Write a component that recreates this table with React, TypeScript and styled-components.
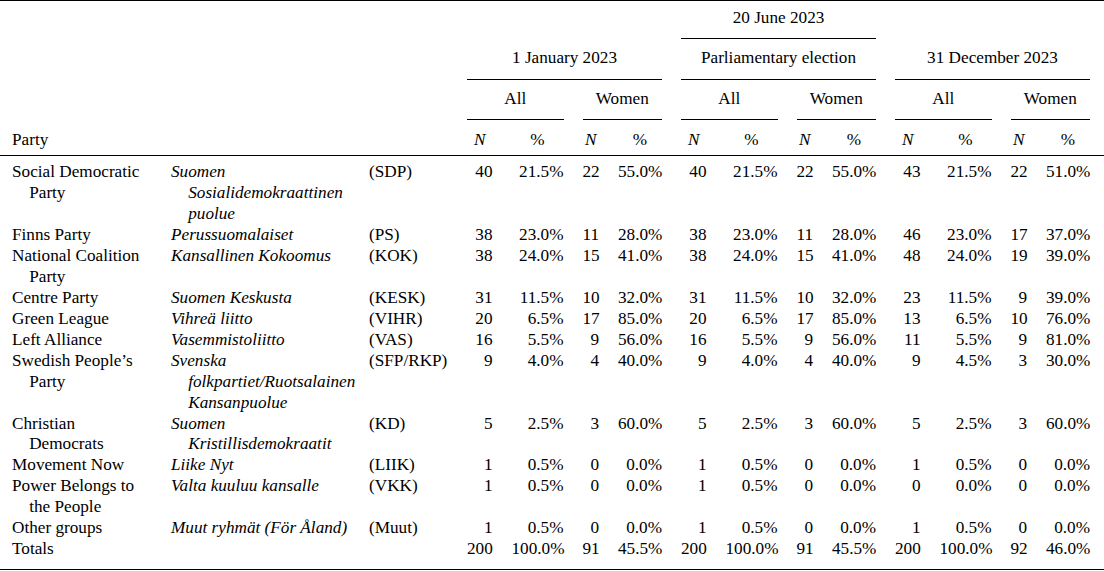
import React from "react";
import styled, { createGlobalStyle } from "styled-components";

const GlobalStyle = createGlobalStyle`
  html, body {
    margin: 0;
    padding: 0;
    background: #fff;
  }
  body {
    font-family: "Liberation Serif", "Times New Roman", serif;
    color: #000;
  }
`;

const Table = styled.div`
  display: grid;
  grid-template-columns: 140px 179px 79px repeat(3, 25.5px 52px 16.5px 44px);
  grid-template-rows: 38px 41px 40px 35px;
  column-gap: 19px;
  width: 1104px;
  box-sizing: border-box;
  padding: 0 14px 0 12px;
  border-top: 1px solid #000;
  font-size: 17.2px;
  line-height: 20.94px;
`;

const HeadCell = styled.div<{
  $span?: number;
  $pt: number;
  $rule?: boolean;
  $align?: "left" | "center";
  $italic?: boolean;
}>`
  grid-column: span ${({ $span }) => $span ?? 1};
  box-sizing: border-box;
  padding-top: ${({ $pt }) => $pt}px;
  text-align: ${({ $align }) => $align ?? "center"};
  font-style: ${({ $italic }) => ($italic ? "italic" : "normal")};
  border-bottom: ${({ $rule }) => ($rule ? "1px solid #000" : "none")};
  white-space: nowrap;
`;

const Rule = styled.div<{ $before?: number; $after?: number }>`
  grid-column: 1 / -1;
  height: 1px;
  background: #000;
  margin: ${({ $before }) => $before ?? 0}px -14px ${({ $after }) => $after ?? 0}px -12px;
`;

const TextCell = styled.div<{ $italic?: boolean }>`
  padding-left: 1em;
  text-indent: -1em;
  font-style: ${({ $italic }) => ($italic ? "italic" : "normal")};
`;

const AbbrCell = styled.div`
  white-space: nowrap;
`;

const NumCell = styled.div`
  text-align: right;
  white-space: nowrap;
`;

type Block = [number, string, number, string];

type Row = {
  en: string;
  fi: string;
  abbr: string;
  v: [Block, Block, Block];
};

const rows: Row[] = [
  {
    en: "Social Democratic Party",
    fi: "Suomen Sosialidemokraattinen puolue",
    abbr: "(SDP)",
    v: [
      [40, "21.5%", 22, "55.0%"],
      [40, "21.5%", 22, "55.0%"],
      [43, "21.5%", 22, "51.0%"],
    ],
  },
  {
    en: "Finns Party",
    fi: "Perussuomalaiset",
    abbr: "(PS)",
    v: [
      [38, "23.0%", 11, "28.0%"],
      [38, "23.0%", 11, "28.0%"],
      [46, "23.0%", 17, "37.0%"],
    ],
  },
  {
    en: "National Coalition Party",
    fi: "Kansallinen Kokoomus",
    abbr: "(KOK)",
    v: [
      [38, "24.0%", 15, "41.0%"],
      [38, "24.0%", 15, "41.0%"],
      [48, "24.0%", 19, "39.0%"],
    ],
  },
  {
    en: "Centre Party",
    fi: "Suomen Keskusta",
    abbr: "(KESK)",
    v: [
      [31, "11.5%", 10, "32.0%"],
      [31, "11.5%", 10, "32.0%"],
      [23, "11.5%", 9, "39.0%"],
    ],
  },
  {
    en: "Green League",
    fi: "Vihreä liitto",
    abbr: "(VIHR)",
    v: [
      [20, "6.5%", 17, "85.0%"],
      [20, "6.5%", 17, "85.0%"],
      [13, "6.5%", 10, "76.0%"],
    ],
  },
  {
    en: "Left Alliance",
    fi: "Vasemmistoliitto",
    abbr: "(VAS)",
    v: [
      [16, "5.5%", 9, "56.0%"],
      [16, "5.5%", 9, "56.0%"],
      [11, "5.5%", 9, "81.0%"],
    ],
  },
  {
    en: "Swedish People’s Party",
    fi: "Svenska folkpartiet/\u2060Ruotsalainen Kansanpuolue",
    abbr: "(SFP/RKP)",
    v: [
      [9, "4.0%", 4, "40.0%"],
      [9, "4.0%", 4, "40.0%"],
      [9, "4.5%", 3, "30.0%"],
    ],
  },
  {
    en: "Christian Democrats",
    fi: "Suomen Kristillisdemokraatit",
    abbr: "(KD)",
    v: [
      [5, "2.5%", 3, "60.0%"],
      [5, "2.5%", 3, "60.0%"],
      [5, "2.5%", 3, "60.0%"],
    ],
  },
  {
    en: "Movement Now",
    fi: "Liike Nyt",
    abbr: "(LIIK)",
    v: [
      [1, "0.5%", 0, "0.0%"],
      [1, "0.5%", 0, "0.0%"],
      [1, "0.5%", 0, "0.0%"],
    ],
  },
  {
    en: "Power Belongs to the People",
    fi: "Valta kuuluu kansalle",
    abbr: "(VKK)",
    v: [
      [1, "0.5%", 0, "0.0%"],
      [1, "0.5%", 0, "0.0%"],
      [0, "0.0%", 0, "0.0%"],
    ],
  },
  {
    en: "Other groups",
    fi: "Muut ryhmät (För Åland)",
    abbr: "(Muut)",
    v: [
      [1, "0.5%", 0, "0.0%"],
      [1, "0.5%", 0, "0.0%"],
      [1, "0.5%", 0, "0.0%"],
    ],
  },
  {
    en: "Totals",
    fi: "",
    abbr: "",
    v: [
      [200, "100.0%", 91, "45.5%"],
      [200, "100.0%", 91, "45.5%"],
      [200, "100.0%", 92, "46.0%"],
    ],
  },
];

const periods = ["1 January 2023", "Parliamentary election", "31 December 2023"];

const App: React.FC = () => {
  return (
    <>
      <GlobalStyle />
      <Table>
        {/* row 1 */}
        <HeadCell $span={7} $pt={6.5} />
        <HeadCell $span={4} $pt={6.5} $rule>
          20 June 2023
        </HeadCell>
        <HeadCell $span={4} $pt={6.5} />

        {/* row 2 */}
        <HeadCell $span={3} $pt={8.5} />
        {periods.map((p) => (
          <HeadCell key={p} $span={4} $pt={8.5} $rule>
            {p}
          </HeadCell>
        ))}

        {/* row 3 */}
        <HeadCell $span={3} $pt={8.5} />
        {periods.map((p) => (
          <React.Fragment key={p}>
            <HeadCell $span={2} $pt={8.5} $rule>
              All
            </HeadCell>
            <HeadCell $span={2} $pt={8.5} $rule>
              Women
            </HeadCell>
          </React.Fragment>
        ))}

        {/* row 4 */}
        <HeadCell $span={3} $pt={9.5} $align="left">
          Party
        </HeadCell>
        {periods.map((p) => (
          <React.Fragment key={p}>
            <HeadCell $pt={9.5} $italic>
              N
            </HeadCell>
            <HeadCell $pt={9.5}>%</HeadCell>
            <HeadCell $pt={9.5} $italic>
              N
            </HeadCell>
            <HeadCell $pt={9.5}>%</HeadCell>
          </React.Fragment>
        ))}

        <Rule $after={6.3} />

        {rows.map((r) => (
          <React.Fragment key={r.en}>
            <TextCell>{r.en}</TextCell>
            <TextCell $italic>{r.fi}</TextCell>
            <AbbrCell>{r.abbr}</AbbrCell>
            {r.v.map((b, i) => (
              <React.Fragment key={i}>
                <NumCell>{b[0]}</NumCell>
                <NumCell>{b[1]}</NumCell>
                <NumCell>{b[2]}</NumCell>
                <NumCell>{b[3]}</NumCell>
              </React.Fragment>
            ))}
          </React.Fragment>
        ))}

        <Rule $before={8.8} />
      </Table>
    </>
  );
};

export default App;
